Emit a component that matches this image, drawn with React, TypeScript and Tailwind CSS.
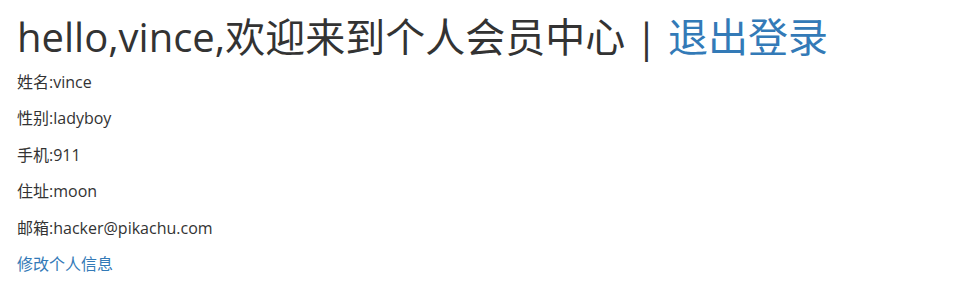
import React from "react";

const info = [
  ["姓名", "vince"],
  ["性别", "ladyboy"],
  ["手机", "911"],
  ["住址", "moon"],
  ["邮箱", "hacker@pikachu.com"],
];

export default function App() {
  return (
    <div
      className="min-h-[300px] bg-white px-[17px] text-[#333]"
      style={{ fontFamily: '"Open Sans", "Noto Sans CJK SC", sans-serif' }}
    >
      {/* Greeting header */}
      <h1 className="pt-[13px] text-[40px] leading-[48px] font-normal">
        hello,vince,欢迎来到个人会员中心 |{" "}
        <a href="#" className="text-[#337ab7]">
          退出登录
        </a>
      </h1>

      {/* Member info */}
      <div className="mt-[10px] flex flex-col gap-[14.4px] text-[16px] leading-[22px]">
        {info.map(([label, value]) => (
          <p key={label}>
            {label}:{value}
          </p>
        ))}
        <a href="#" className="text-[#337ab7]">
          修改个人信息
        </a>
      </div>
    </div>
  );
}
